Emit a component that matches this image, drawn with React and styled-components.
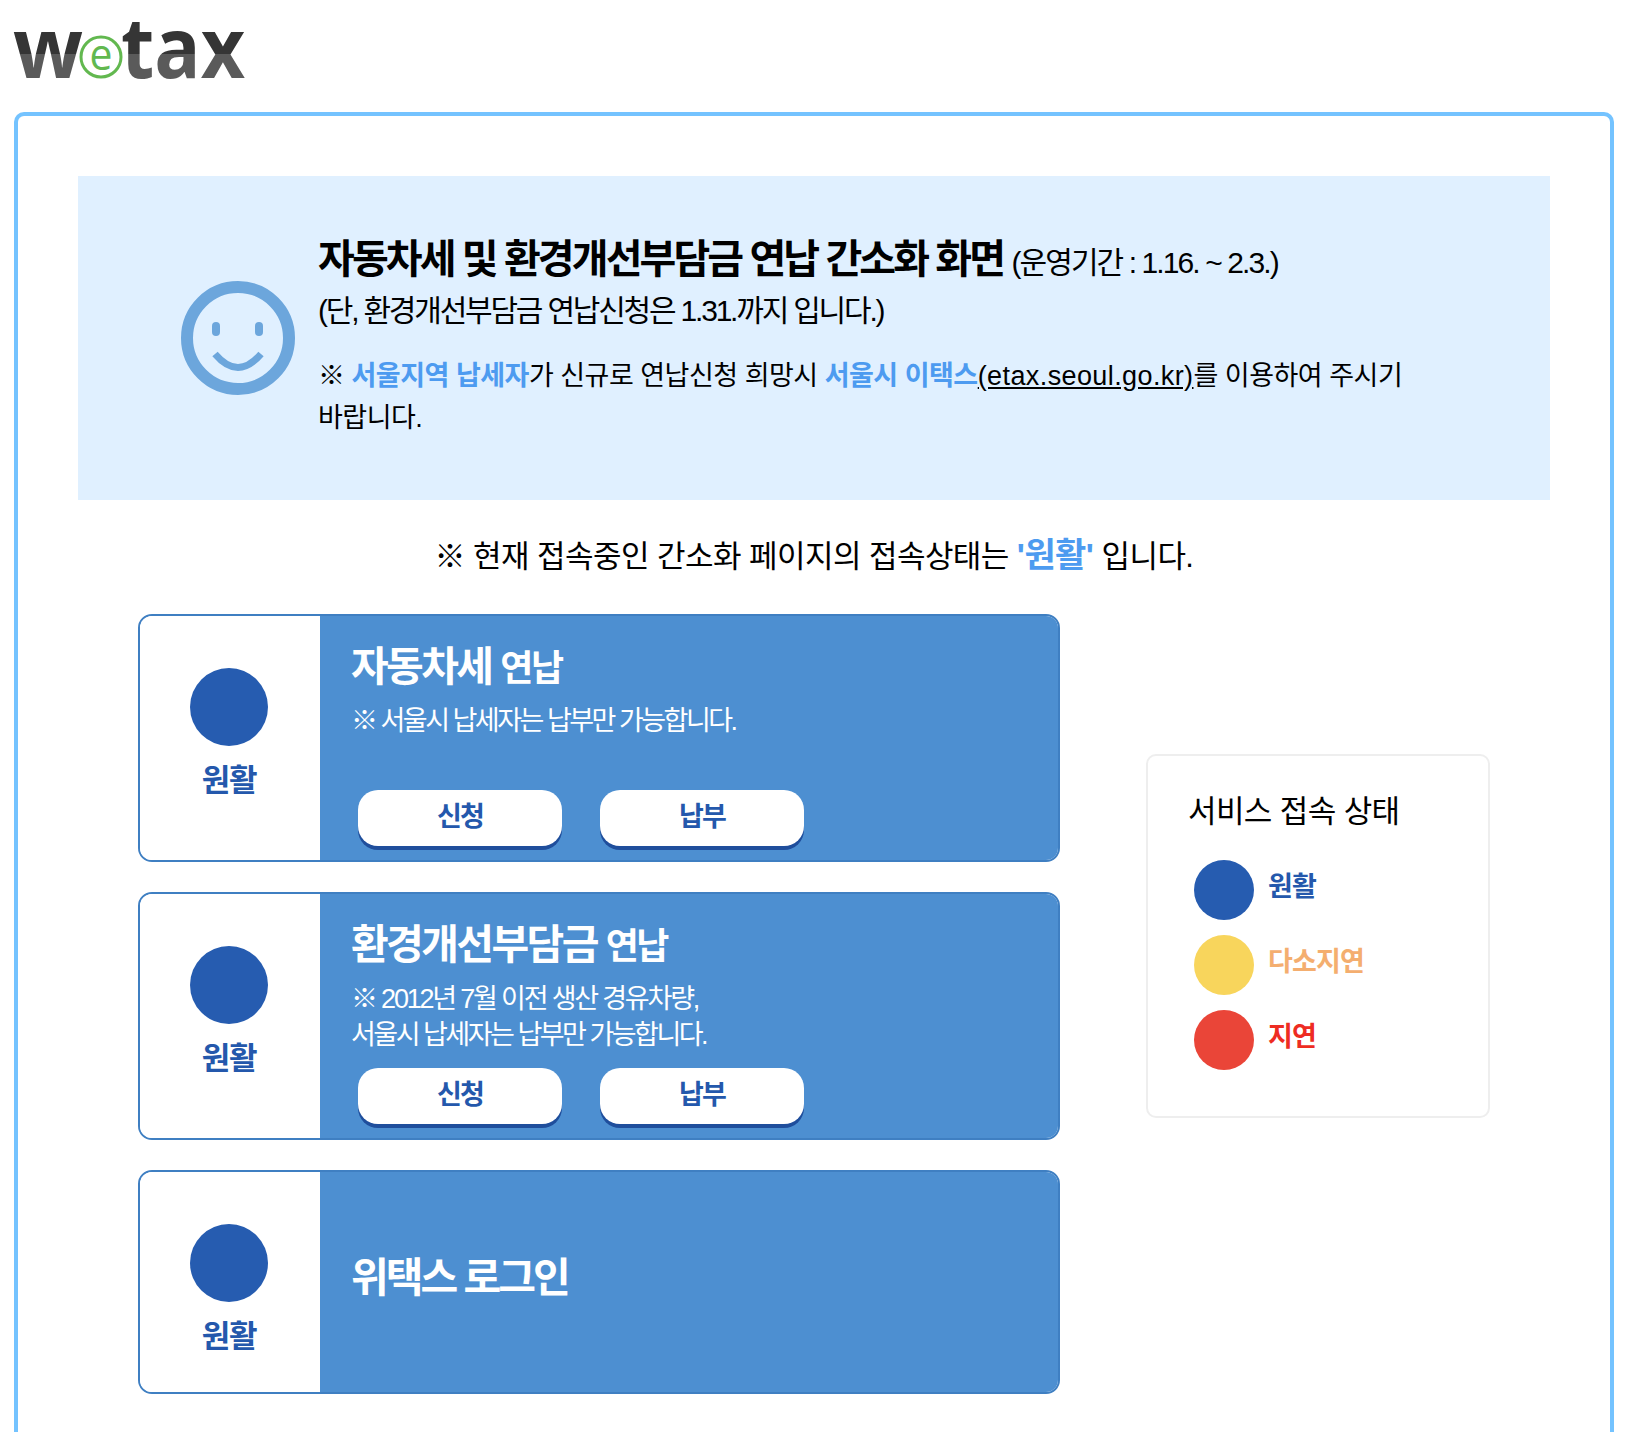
import React from "react";
import styled, { createGlobalStyle } from "styled-components";

const Global = createGlobalStyle`
  html, body {
    margin: 0;
    padding: 0;
    height: 1432px;
    overflow: hidden;
    background: #fff;
    font-family: "Liberation Sans", "Noto Sans CJK KR", sans-serif;
    color: #000;
  }
`;

const Page = styled.div`
  padding: 22px 14px 0;
`;

const LogoBox = styled.div`
  height: 90px;
  svg {
    overflow: visible;
  }
`;

const Frame = styled.div`
  border: 4px solid #74c3ff;
  border-bottom: 0;
  border-radius: 10px 10px 0 0;
  padding: 60px 60px 140px;
`;

const Notice = styled.div`
  display: flex;
  align-items: flex-start;
  height: 324px;
  box-sizing: border-box;
  padding: 60px 120px 0 103px;
  background: #e0f0ff;
`;

const Smile = styled.svg`
  flex: none;
  width: 114px;
  height: 114px;
  margin: 45px 23px 0 0;
`;

const NoticeText = styled.div`
  flex: 1;
  word-break: keep-all;
`;

const Headline = styled.h1`
  margin: 0;
  font-size: 40px;
  line-height: 46px;
  font-weight: 700;
  letter-spacing: -2.9px;
  small {
    font-size: 30px;
    font-weight: 400;
    letter-spacing: -1.9px;
  }
`;

const SubHead = styled.p`
  margin: 3px 0 0;
  font-size: 30px;
  line-height: 44px;
  letter-spacing: -2.2px;
`;

const Remark = styled.p`
  margin: 22px 0 0;
  font-size: 27px;
  line-height: 42px;
  letter-spacing: -0.5px;
  a {
    color: #000;
    text-decoration: underline;
    letter-spacing: 0.4px;
  }
`;

const Accent = styled.b`
  color: #4d9bf0;
`;

const ConnAccent = styled(Accent)`
  font-size: 34px;
`;

const ConnState = styled.p`
  margin: 33px 0 0;
  height: 81px;
  text-align: center;
  font-size: 31px;
  line-height: 44px;
  letter-spacing: -0.55px;
`;

const Columns = styled.div`
  display: flex;
  align-items: flex-start;
  padding-left: 60px;
`;

const CardList = styled.div`
  display: flex;
  flex-direction: column;
  gap: 30px;
  width: 922px;
`;

const Card = styled.section`
  display: flex;
  height: ${(p) => p.$h}px;
  box-sizing: border-box;
  border: 2px solid #3f7fc2;
  border-radius: 14px;
  overflow: hidden;
`;

const StatusCell = styled.div`
  flex: none;
  width: 180px;
  display: flex;
  flex-direction: column;
  align-items: center;
  padding: 52px 2px 0 0;
  box-sizing: border-box;
  background: #fff;
`;

const Dot = styled.span`
  display: block;
  flex: none;
  width: ${(p) => p.$size}px;
  height: ${(p) => p.$size}px;
  border-radius: 50%;
  background: ${(p) => p.$color};
`;

const StatusLabel = styled.b`
  margin-top: 15px;
  font-size: 31px;
  line-height: 40px;
  letter-spacing: -1.2px;
  color: #2458ac;
`;

const Body = styled.div`
  flex: 1;
  display: flex;
  flex-direction: column;
  justify-content: ${(p) => (p.$center ? "center" : "flex-start")};
  padding: ${(p) => (p.$center ? "0 0 9px 31px" : "27px 0 0 31px")};
  background: #4d8fd1;
  color: #fff;
`;

const CardTitle = styled.h2`
  margin: 0;
  font-size: 41px;
  line-height: 48px;
  font-weight: 700;
  letter-spacing: ${(p) => (p.$tight ? "-3px" : "-2.6px")};
  small {
    font-size: 36px;
    letter-spacing: -2.4px;
  }
`;

const CardNote = styled.p`
  margin: 10px 0 0;
  font-size: 27px;
  line-height: 36px;
  letter-spacing: -2.5px;
`;

const NoteWide = styled.span`
  letter-spacing: -2.2px;
`;

const Buttons = styled.div`
  margin-top: auto;
  margin-bottom: 14px;
  margin-left: 7px;
  display: flex;
  gap: 38px;
`;

const ActionButton = styled.button`
  width: 204px;
  height: 56px;
  padding: 0 0 2px;
  border: 0;
  border-radius: 20px;
  background: #fff;
  box-shadow: 0 4px 0 #1f4e9c;
  color: #2458ac;
  font: 700 27px/1 "Liberation Sans", "Noto Sans CJK KR", sans-serif;
  letter-spacing: -1.8px;
`;

const Legend = styled.aside`
  flex: none;
  width: 344px;
  height: 364px;
  box-sizing: border-box;
  margin: 140px 0 0 86px;
  padding: 35px 40px;
  border: 2px solid #eeeeee;
  border-radius: 10px;
`;

const LegendTitle = styled.div`
  font-size: 31px;
  line-height: 42px;
  letter-spacing: -0.6px;
`;

const LegendList = styled.ul`
  list-style: none;
  margin: 27px 0 0;
  padding: 0 0 0 6px;
  display: flex;
  flex-direction: column;
  gap: 15px;
`;

const LegendItem = styled.li`
  display: flex;
  align-items: center;
  gap: 14px;
  height: 60px;
`;

const LegendText = styled.b`
  position: relative;
  top: -6px;
  font-size: 27px;
  letter-spacing: -0.8px;
  color: ${(p) => p.$color};
`;

function Logo() {
  return (
    <svg width="240" height="64" viewBox="0 0 240 64">
      <defs>
        <linearGradient id="logoInk" x1="0" y1="0" x2="0" y2="64" gradientUnits="userSpaceOnUse">
          <stop offset="0.5" stopColor="#353535" />
          <stop offset="0.5" stopColor="#5a5a5a" />
        </linearGradient>
      </defs>
      <g fill="url(#logoInk)" fontFamily="'Open Sans', sans-serif" fontWeight="700" fontSize="84">
        <text x="-1" y="56" textLength="70" lengthAdjust="spacingAndGlyphs">w</text>
        <text x="107" y="56" textLength="124" lengthAdjust="spacingAndGlyphs">tax</text>
      </g>
      <circle cx="87" cy="35" r="20" fill="#fff" stroke="#62b84f" strokeWidth="3" />
      <text x="87" y="48" textAnchor="middle" textLength="23" lengthAdjust="spacingAndGlyphs" fill="#62b84f" fontFamily="'Open Sans', sans-serif" fontSize="44">e</text>
    </svg>
  );
}

function Smiley() {
  return (
    <Smile viewBox="0 0 114 114">
      <circle cx="57" cy="57" r="51" fill="none" stroke="#6ca6dc" strokeWidth="12" />
      <rect x="31" y="41" width="8" height="14" rx="4" fill="#6ca6dc" />
      <rect x="74" y="41" width="8" height="14" rx="4" fill="#6ca6dc" />
      <path d="M34 73 Q57 100 80 73" fill="none" stroke="#6ca6dc" strokeWidth="7" />
    </Smile>
  );
}

function ServiceCard({ height, center, children }) {
  return (
    <Card $h={height}>
      <StatusCell>
        <Dot $size={78} $color="#265cb0" />
        <StatusLabel>원활</StatusLabel>
      </StatusCell>
      <Body $center={center}>{children}</Body>
    </Card>
  );
}

function CardActions() {
  return (
    <Buttons>
      <ActionButton>신청</ActionButton>
      <ActionButton>납부</ActionButton>
    </Buttons>
  );
}

const legend = [
  { label: "원활", dot: "#265cb0", text: "#2458ac" },
  { label: "다소지연", dot: "#f8d55c", text: "#f4ae6f" },
  { label: "지연", dot: "#ea4538", text: "#ee2c22" },
];

export default function App() {
  return (
    <Page>
      <Global />
      <LogoBox>
        <Logo />
      </LogoBox>
      <Frame>
        <Notice>
          <Smiley />
          <NoticeText>
            <Headline>
              자동차세 및 환경개선부담금 연납 간소화 화면 <small>(운영기간 : 1.16. ~ 2.3.)</small>
            </Headline>
            <SubHead>(단, 환경개선부담금 연납신청은 1.31.까지 입니다.)</SubHead>
            <Remark>
              ※ <Accent>서울지역 납세자</Accent>가 신규로 연납신청 희망시 <Accent>서울시 이택스</Accent>
              <a href="#etax">(etax.seoul.go.kr)</a>를 이용하여 주시기 바랍니다.
            </Remark>
          </NoticeText>
        </Notice>
        <ConnState>
          ※ 현재 접속중인 간소화 페이지의 접속상태는 <ConnAccent>'원활'</ConnAccent> 입니다.
        </ConnState>
        <Columns>
          <CardList>
            <ServiceCard height={248}>
              <CardTitle>
                자동차세 <small>연납</small>
              </CardTitle>
              <CardNote>※ 서울시 납세자는 납부만 가능합니다.</CardNote>
              <CardActions />
            </ServiceCard>
            <ServiceCard height={248}>
              <CardTitle>
                환경개선부담금 <small>연납</small>
              </CardTitle>
              <CardNote>
                <NoteWide>※ 2012년 7월 이전 생산 경유차량,</NoteWide>
                <br />
                서울시 납세자는 납부만 가능합니다.
              </CardNote>
              <CardActions />
            </ServiceCard>
            <ServiceCard height={224} center>
              <CardTitle $tight>위택스 로그인</CardTitle>
            </ServiceCard>
          </CardList>
          <Legend>
            <LegendTitle>서비스 접속 상태</LegendTitle>
            <LegendList>
              {legend.map((item) => (
                <LegendItem key={item.label}>
                  <Dot $size={60} $color={item.dot} />
                  <LegendText $color={item.text}>{item.label}</LegendText>
                </LegendItem>
              ))}
            </LegendList>
          </Legend>
        </Columns>
      </Frame>
    </Page>
  );
}
